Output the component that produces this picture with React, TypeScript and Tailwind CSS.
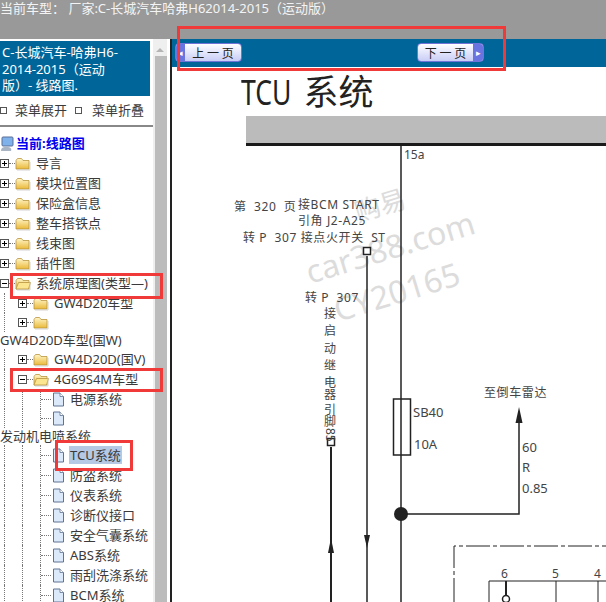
import React from 'react';

const sans = '"Noto Sans", "Noto Sans CJK SC", sans-serif';

const Folder = ({ open }: { open?: boolean }) => (
  <svg width="16" height="15" viewBox="0 0 16 15" className="shrink-0">
    <defs>
      <linearGradient id="fold" x1="0" y1="0" x2="0" y2="1">
        <stop offset="0" stopColor="#fff6c8" />
        <stop offset="1" stopColor="#eab93a" />
      </linearGradient>
    </defs>
    <path d="M1 4.5 L2.5 2.5 H6.5 L8 4.5 H14 V13 H1 Z" fill="url(#fold)" stroke="#b9953f" strokeWidth="0.8" />
    {open && <path d="M1 13 L3.5 6.5 H15.5 L13.5 13 Z" fill="#fce58f" stroke="#b9953f" strokeWidth="0.8" />}
    <path d="M2 14 H15 V6" fill="none" stroke="#c9c9c9" strokeWidth="0.8" />
  </svg>
);

const Doc = () => (
  <svg width="13" height="15" viewBox="0 0 13 15" className="shrink-0">
    <path d="M1.5 1 H8 L11.5 4.5 V14 H1.5 Z" fill="#dbe9fb" stroke="#5f7390" strokeWidth="1" />
    <path d="M8 1 V4.5 H11.5" fill="#fff" stroke="#5f7390" strokeWidth="0.8" />
  </svg>
);

const Toggle = ({ open }: { open?: boolean }) => (
  <span className="relative flex h-[9px] w-[9px] shrink-0 items-center justify-center border border-[#555] bg-white">
    <span className="h-px w-[5px] bg-black" />
    {!open && <span className="absolute h-[5px] w-px bg-black" />}
  </span>
);

// one tree row; depth columns are 18px wide with a dotted guide in each
const Row = ({
  depth,
  label,
  kind,
  open,
  selected,
  h = 'h-5',
}: {
  depth: number;
  label?: string;
  kind: 'folder' | 'doc';
  open?: boolean;
  selected?: boolean;
  h?: string;
}) => (
  <div className={`flex items-center ${h} whitespace-nowrap text-[13px] text-[#3a3a3a]`}>
    {Array.from({ length: depth }).map((_, i) => (
      <span key={i} className="h-full w-[18px] shrink-0 pl-1">
        <span className="block h-full border-l border-dotted border-[#777]" />
      </span>
    ))}
    <span className="relative flex h-full w-[15px] shrink-0 items-center">
      {kind === 'folder' ? (
        <>
          <span className="w-[9px] shrink-0"><Toggle open={open} /></span>
          <span className="w-[6px] border-t border-dotted border-[#777]" />
        </>
      ) : (
        <>
          <span className="ml-1 h-full border-l border-dotted border-[#777]" />
          <span className="w-[10px] border-t border-dotted border-[#777]" />
        </>
      )}
    </span>
    {kind === 'folder' ? <Folder open={open} /> : <span className="ml-[1px]"><Doc /></span>}
    {label && (
      <span className={`ml-1 px-[1px] leading-[18px] ${selected ? 'bg-[#b5c9e4]' : ''}`}>{label}</span>
    )}
  </div>
);

const PageButton = ({ label, next }: { label: string; next?: boolean }) => (
  <div className="flex h-[19px] w-[67px] items-stretch overflow-hidden rounded-sm border border-[#6f74d6] bg-gradient-to-b from-white to-[#c9cdf6]">
    {!next && <span className="flex w-[9px] items-center justify-center bg-[#6a74e0] text-[9px] leading-none text-white">◂</span>}
    <span
      className="flex-1 text-center text-[12px] leading-[17px] text-[#222]"
      style={{ fontFamily: '"Noto Sans CJK SC", serif' }}
    >
      {label}
    </span>
    {next && <span className="flex w-[10px] items-center justify-center bg-[#6a74e0] text-[9px] leading-none text-white">▸</span>}
  </div>
);

const vertical = [
  ['接', 315],
  ['启', 333],
  ['动', 351],
  ['继', 369],
  ['电', 387],
  ['器', 385],
];

const Diagram = () => (
  <svg width="434" height="456" viewBox="172 146 434 456" className="block">
    {/* watermark */}
    <g fill="#dcdcdc" fontFamily='"Noto Sans", "Noto Sans CJK SC", sans-serif'>
      <text x="310" y="284" fontSize="32" transform="rotate(-17 310 284)">car388.com</text>
      <text x="338" y="322" fontSize="32" transform="rotate(-17 338 322)">CY20165</text>
      <text x="358" y="222" fontSize="26" transform="rotate(-17 358 222)">购易</text>
    </g>

    {/* wires */}
    <g stroke="#222" fill="none">
      <path d="M401 146 V602" strokeWidth="1.5" />
      <path d="M367 256 V602" strokeWidth="1.5" />
      <path d="M331 447 V602" strokeWidth="2" />
      <path d="M401 514 H519 V420" strokeWidth="1.5" />
      <rect x="393.5" y="399" width="17" height="56" fill="#fff" strokeWidth="1.5" />
      <path d="M401 399 V455" strokeWidth="1.5" />
      <rect x="363.5" y="247.5" width="7" height="7" fill="#fff" strokeWidth="1.5" />
      <rect x="327.5" y="438.5" width="7" height="7" fill="#fff" strokeWidth="1.5" />
    </g>
    <circle cx="401" cy="514" r="7" fill="#222" />
    <path d="M519 407 L522.5 423 H515.5 Z" fill="#222" />
    <path d="M367 548 L364 535 H370 Z" fill="#222" />
    <path d="M331 538 L334 553 H328 Z" fill="#222" />

    {/* connector */}
    <path d="M454 602 V546 H606" fill="none" stroke="#222" strokeWidth="1" strokeDasharray="24 3 4 3" />
    <path d="M606 581 H489 V602 M556 581 V602 M598 581 V602" fill="none" stroke="#222" strokeWidth="1" />
    <path d="M506 581 V595" stroke="#222" strokeWidth="2" />
    <circle cx="506" cy="599" r="3.5" fill="#fff" stroke="#222" strokeWidth="1.5" />

    {/* labels */}
    <g fill="#444" fontSize="12" fontFamily='"Noto Sans", "Noto Sans CJK SC", sans-serif'>
      <text x="404" y="159">15a</text>
      <text x="234" y="211" letterSpacing="0.6" xmlSpace="preserve">第  320  页</text>
      <text x="298" y="209" letterSpacing="0.6">接BCM START</text>
      <text x="298" y="225" letterSpacing="0.6">引角 J2-A25</text>
      <text x="243" y="242" letterSpacing="0.6" xmlSpace="preserve">转 P  307 接点火开关  ST</text>
      <text x="305" y="302" letterSpacing="0.6" xmlSpace="preserve">转 P  307</text>
      <text x="324" y="318">接</text>
      <text x="324" y="335">启</text>
      <text x="324" y="353">动</text>
      <text x="324" y="370">继</text>
      <text x="324" y="387">电</text>
      <text x="324" y="390" opacity="0">器</text>
      <text x="324" y="403" style={{ display: 'none' }}>器</text>
      <text x="324" y="390" style={{ display: 'none' }}>{vertical.length}</text>
      <text x="324" y="399">器</text>
      <text x="324" y="414">引</text>
      <text x="324" y="426">脚</text>
      <text x="0" y="0" transform="translate(326 428) rotate(90)">85</text>
      <text x="413" y="417" fontSize="13">SB40</text>
      <text x="414" y="449" fontSize="13">10A</text>
      <text x="484" y="397" letterSpacing="0.6">至倒车雷达</text>
      <text x="522" y="452" fontSize="13">60</text>
      <text x="522" y="472" fontSize="13">R</text>
      <text x="522" y="493" fontSize="13">0.85</text>
      <text x="501" y="578">6</text>
      <text x="552" y="578">5</text>
      <text x="594" y="578">4</text>
    </g>
  </svg>
);

export default function App() {
  return (
    <div className="relative h-[602px] w-[606px] overflow-hidden bg-white" style={{ fontFamily: sans }}>
      <div className="h-[39px] whitespace-nowrap bg-[#999999] text-[13px] leading-[16px] text-[#f4f4f4]">
        当前车型： 厂家:C-长城汽车哈弗H62014-2015（运动版）
      </div>

      <div className="flex h-[563px]">
        <aside className="flex w-[170px] shrink-0">
          <div className="w-[153px] shrink-0 overflow-hidden pt-[2px]">
            <div className="h-[55px] w-[150px] bg-[#006699] pl-[2px] pt-[3px] text-[13px] leading-[16.5px] text-white">
              C-长城汽车-哈弗H6-
              <br />
              2014-2015（运动
              <br />
              版）- 线路图.
            </div>
            <div className="flex h-[31px] items-center border-b-2 border-[#888] text-[13px] text-[#3a3a3a]">
              <span className="flex h-[7px] w-[7px] items-center justify-center border border-[#555]" />
              <span className="ml-2 mr-2">菜单展开</span>
              <span className="flex h-[7px] w-[7px] items-center justify-center border border-[#555]" />
              <span className="ml-[10px]">菜单折叠</span>
            </div>

            <div className="flex h-[26px] items-center pt-2 text-[13px] font-bold text-[#0000ee]">
              <svg width="14" height="16" viewBox="0 0 14 16" className="mr-[2px] shrink-0">
                <rect x="2" y="1" width="11" height="9" rx="1" fill="#7fb2ea" stroke="#5a6f99" />
                <path d="M1 15 C1 11 4 11 7 11 C10 11 12 12 11 15 Z" fill="#a9b4c4" />
              </svg>
              当前:线路图
            </div>
            <Row depth={0} kind="folder" label="导言" />
            <Row depth={0} kind="folder" label="模块位置图" />
            <Row depth={0} kind="folder" label="保险盒信息" />
            <Row depth={0} kind="folder" label="整车搭铁点" />
            <Row depth={0} kind="folder" label="线束图" />
            <Row depth={0} kind="folder" label="插件图" />
            <Row depth={0} kind="folder" label="系统原理图(类型—)" open />
            <Row depth={1} kind="folder" label="GW4D20车型" />
            <Row depth={1} kind="folder" h="h-[19px]" />
            <div className="h-[17px] whitespace-nowrap text-[13px] leading-[17px] text-[#3a3a3a]">GW4D20D车型(国W)</div>
            <Row depth={1} kind="folder" label="GW4D20D(国V)" />
            <Row depth={1} kind="folder" label="4G69S4M车型" open />
            <Row depth={2} kind="doc" label="电源系统" />
            <Row depth={2} kind="doc" h="h-[19px]" />
            <div className="h-[17px] whitespace-nowrap text-[13px] leading-[17px] text-[#3a3a3a]">发动机电喷系统</div>
            <Row depth={2} kind="doc" label="TCU系统" selected />
            <Row depth={2} kind="doc" label="防盗系统" />
            <Row depth={2} kind="doc" label="仪表系统" />
            <Row depth={2} kind="doc" label="诊断仪接口" />
            <Row depth={2} kind="doc" label="安全气囊系统" />
            <Row depth={2} kind="doc" label="ABS系统" />
            <Row depth={2} kind="doc" label="雨刮洗涤系统" />
            <Row depth={2} kind="doc" label="BCM系统" />
          </div>

          <div className="flex w-[14px] shrink-0 flex-col bg-[#efefef]">
            <div className="flex h-[17px] items-end justify-center pb-[4px]">
              <span className="h-0 w-0 border-x-[4px] border-b-[4px] border-x-transparent border-b-[#b5b5b5]" />
            </div>
            <div className="ml-[2px] flex-1 bg-[#bcbcbc]" />
          </div>
        </aside>

        <div className="w-[2px] shrink-0 bg-[#222]" />

        <main className="min-w-0 flex-1 overflow-hidden">
          <div className="flex h-[28px] items-center bg-[#006699] pb-[2px] pl-[3px]">
            <PageButton label="上 一 页" />
            <div className="ml-[175px]">
              <PageButton label="下 一 页" next />
            </div>
          </div>
          <h1 className="flex h-[49px] items-center whitespace-nowrap pl-[69px] text-[35px] leading-none text-[#222]">
            <span className="mr-[-17px] inline-block origin-left scale-x-[0.76]">TCU</span>
            <span className="ml-[13px]">系统</span>
          </h1>
          <div className="ml-[74px] h-[30px] border-b-[3px] border-[#1a1a1a] bg-[#bbbbbb]" />
          <Diagram />
        </main>
      </div>

      {/* red annotation boxes drawn over the page */}
      <div className="absolute left-[177px] top-[26px] h-[45px] w-[329px] border-[3px] border-[#f03a3a]" />
      <div className="absolute left-[10px] top-[273px] h-[26px] w-[153px] border-[3px] border-[#f03a3a]" />
      <div className="absolute left-[10px] top-[368px] h-[24px] w-[153px] border-[3px] border-[#f03a3a]" />
      <div className="absolute left-[55px] top-[440px] h-[31px] w-[78px] border-[3px] border-[#f03a3a]" />
    </div>
  );
}
